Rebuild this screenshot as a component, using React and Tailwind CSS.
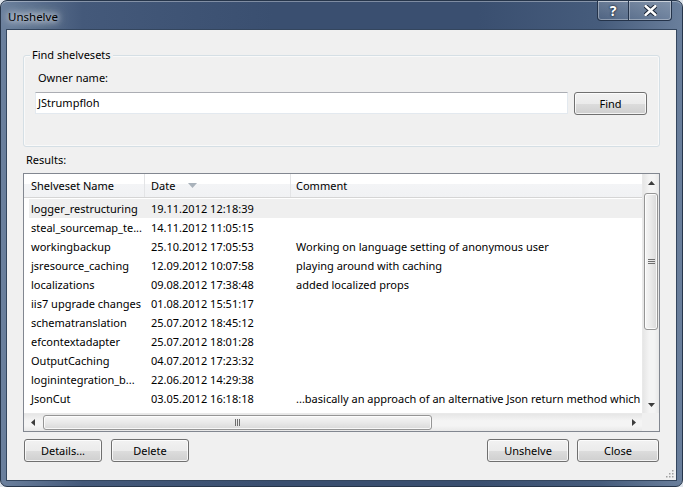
import React from "react";

const rows = [
  ["logger_restructuring", "19.11.2012 12:18:39", ""],
  ["steal_sourcemap_te...", "14.11.2012 11:05:15", ""],
  ["workingbackup", "25.10.2012 17:05:53", "Working on language setting of anonymous user"],
  ["jsresource_caching", "12.09.2012 10:07:58", "playing around with caching"],
  ["localizations", "09.08.2012 17:38:48", "added localized props"],
  ["iis7 upgrade changes", "01.08.2012 15:51:17", ""],
  ["schematranslation", "25.07.2012 18:45:12", ""],
  ["efcontextadapter", "25.07.2012 18:01:28", ""],
  ["OutputCaching", "04.07.2012 17:23:32", ""],
  ["loginintegration_b...", "22.06.2012 14:29:38", ""],
  ["JsonCut", "03.05.2012 16:18:18", "...basically an approach of an alternative Json return method which"],
];

const btn =
  "h-[23px] rounded-[3px] border border-[#707070] bg-[linear-gradient(to_bottom,#f2f2f2_0%,#ebebeb_50%,#dddddd_50%,#cfcfcf_100%)] shadow-[inset_0_0_0_1px_rgba(255,255,255,0.75)] text-black flex items-center justify-center";

const Button = ({ children, className = "" }) => (
  <button className={`${btn} ${className}`}>{children}</button>
);

const VScroll = () => (
  <div className="w-[17px] flex flex-col border-l border-[#e9e9e9] bg-[linear-gradient(to_right,#e6e6e6,#f4f4f4_40%,#f4f4f4_70%,#e8e8e8)]">
    {/* up arrow */}
    <div className="h-[17px] flex items-center justify-center">
      <svg width="7" height="4" viewBox="0 0 7 4">
        <path d="M0 4 L3.5 0 L7 4 Z" fill="#3c3c3c" />
      </svg>
    </div>
    {/* thumb */}
    <div className="mt-[2px] mx-[1px] h-[137px] rounded-[3px] border border-[#959595] bg-[linear-gradient(to_right,#f6f6f6,#e9e9e9_50%,#d9d9d9)] shadow-[inset_0_0_0_1px_rgba(255,255,255,0.8)] flex items-center justify-center">
      <div className="flex flex-col gap-[1px]">
        <div className="w-[7px] h-[1px] bg-[#6e6e6e]" />
        <div className="w-[7px] h-[1px] bg-[#6e6e6e]" />
        <div className="w-[7px] h-[1px] bg-[#6e6e6e]" />
      </div>
    </div>
    <div className="flex-1" />
    {/* down arrow */}
    <div className="h-[17px] flex items-center justify-center">
      <svg width="7" height="4" viewBox="0 0 7 4">
        <path d="M0 0 L7 0 L3.5 4 Z" fill="#3c3c3c" />
      </svg>
    </div>
  </div>
);

const HScroll = () => (
  <div className="h-[18px] flex border-t border-[#e9e9e9] bg-[linear-gradient(to_bottom,#e6e6e6,#f4f4f4_40%,#f4f4f4_70%,#e8e8e8)]">
    <div className="w-[17px] flex items-center justify-center">
      <svg width="4" height="7" viewBox="0 0 4 7">
        <path d="M4 0 L0 3.5 L4 7 Z" fill="#3c3c3c" />
      </svg>
    </div>
    <div className="my-[1px] ml-[2px] w-[389px] rounded-[3px] border border-[#959595] bg-[linear-gradient(to_bottom,#f6f6f6,#e9e9e9_50%,#d9d9d9)] shadow-[inset_0_0_0_1px_rgba(255,255,255,0.8)] flex items-center justify-center">
      <div className="flex gap-[1px]">
        <div className="w-[1px] h-[7px] bg-[#6e6e6e]" />
        <div className="w-[1px] h-[7px] bg-[#6e6e6e]" />
        <div className="w-[1px] h-[7px] bg-[#6e6e6e]" />
      </div>
    </div>
    <div className="flex-1" />
    <div className="w-[17px] flex items-center justify-center">
      <svg width="4" height="7" viewBox="0 0 4 7">
        <path d="M0 0 L4 3.5 L0 7 Z" fill="#3c3c3c" />
      </svg>
    </div>
  </div>
);

const App = () => {
  return (
    <div className="w-[683px] h-[487px] bg-[#dfe5ec] font-['Segoe_UI','Noto_Sans',sans-serif] text-[11px] leading-[16px] text-black">
      <div className="h-full flex flex-col rounded-[7px] border border-[#26354a] px-[5px] pb-[5px] bg-[linear-gradient(to_right,#6b809d_0%,#44597a_12%,#3a4f70_40%,#3a4f70_70%,#465c7c_88%,#6a7f9c_100%)] shadow-[inset_0_1px_0_rgba(255,255,255,0.35)]">
        {/* title bar */}
        <div className="h-[28px] flex justify-between">
          <div className="pl-[2px] pt-[8px]">
            <span className="text-[11.5px] text-black [text-shadow:0_0_6px_#ffffff,0_0_10px_rgba(255,255,255,0.9),0_0_14px_rgba(255,255,255,0.7)]">
              Unshelve
            </span>
          </div>
          <div className="mr-[5px] flex h-[20px] rounded-b-[4px] border border-t-0 border-[#24334a] shadow-[inset_0_0_0_1px_rgba(255,255,255,0.35)] bg-[linear-gradient(to_bottom,rgba(255,255,255,0.18),rgba(255,255,255,0.05))]">
            <div className="w-[31px] flex items-center justify-center border-r border-[#24334a] text-white font-bold text-[14px] [text-shadow:0_0_2px_#1a2535,0_0_2px_#1a2535]">
              ?
            </div>
            <div className="w-[42px] flex items-center justify-center shadow-[inset_1px_0_0_rgba(255,255,255,0.3)]">
              <svg width="13" height="11" viewBox="0 0 13 11">
                <path d="M1.5 1 L11.5 10 M11.5 1 L1.5 10" stroke="#1a2535" strokeWidth="4.5" strokeLinecap="round" />
                <path d="M1.5 1 L11.5 10 M11.5 1 L1.5 10" stroke="#ffffff" strokeWidth="2.4" strokeLinecap="round" />
              </svg>
            </div>
          </div>
        </div>

        {/* client area */}
        <div className="flex-1 flex flex-col border border-[#34465e] bg-[#f0f0f0] relative">
          {/* find group */}
          <div className="mt-[25px] mx-[16px] h-[92px] relative rounded-[3px] border border-[#d5dfe5] shadow-[inset_0_0_0_1px_rgba(255,255,255,0.6)] pt-[14px] pl-[11px] pr-[12px]">
            <span className="absolute -top-[9px] left-[6px] px-[2px] bg-[#f0f0f0]">Find shelvesets</span>
            <div className="ml-[3px]">Owner name:</div>
            <div className="mt-[6px] flex gap-[6px]">
              <div className="flex-1 h-[22px] bg-white border border-[#e3e9ef] border-t-[#abadb3] flex items-center pl-[2px]">
                JStrumpfloh
              </div>
              <Button className="w-[73px] h-[22px]">Find</Button>
            </div>
          </div>

          <div className="mt-[5px] ml-[19px]">Results:</div>

          {/* list view */}
          <div className="mt-[5px] mx-[16px] h-[259px] border border-[#828790] bg-white flex flex-col">
            <div className="flex-1 flex min-h-0">
              <div className="flex-1 flex flex-col min-w-0">
                {/* header */}
                <div className="h-[24px] flex border-b border-[#d5d5d5] bg-[linear-gradient(to_bottom,#ffffff_0%,#ffffff_45%,#f3f4f6_45%,#f1f2f4_100%)]">
                  <div className="w-[121px] border-r border-[#e3e4e6] pl-[7px] flex items-center">Shelveset Name</div>
                  <div className="w-[146px] border-r border-[#e3e4e6] pl-[6px] flex items-center">
                    Date
                    <svg className="ml-[13px]" width="9" height="5" viewBox="0 0 9 5">
                      <path d="M0 0 L9 0 L4.5 5 Z" fill="#a9b2bb" />
                    </svg>
                  </div>
                  <div className="flex-1 pl-[5px] flex items-center">Comment</div>
                </div>
                {/* rows */}
                <div className="flex-1 overflow-hidden pt-[1px] pl-[5px]">
                  {rows.map((r, i) => (
                    <div
                      key={i}
                      className={`h-[19px] flex items-center whitespace-nowrap ${i === 0 ? "bg-[#efefef]" : ""}`}
                    >
                      <div className="w-[115px] pl-[2px] overflow-hidden">{r[0]}</div>
                      <div className="w-[146px] pl-[7px]">{r[1]}</div>
                      <div className="flex-1 pl-[6px] overflow-hidden">{r[2]}</div>
                    </div>
                  ))}
                </div>
              </div>
              <VScroll />
            </div>
            <div className="flex">
              <div className="flex-1">
                <HScroll />
              </div>
              <div className="w-[17px] h-[18px] bg-[#f0f0f0]" />
            </div>
          </div>

          {/* buttons */}
          <div className="mt-[7px] ml-[17px] mr-[17px] flex">
            <Button className="w-[78px] border-[#3c7fb1] shadow-[inset_0_0_0_1px_#b8e3f7]">Details...</Button>
            <Button className="w-[78px] ml-[9px]">Delete</Button>
            <div className="flex-1" />
            <Button className="w-[82px]">Unshelve</Button>
            <Button className="w-[82px] ml-[8px]">Close</Button>
          </div>

          {/* resize grip */}
          <svg className="absolute right-[2px] bottom-[2px]" width="10" height="10" viewBox="0 0 10 10">
            {[[8, 2], [8, 5], [8, 8], [5, 5], [5, 8], [2, 8]].map(([x, y], i) => (
              <rect key={i} x={x} y={y} width="1.5" height="1.5" fill="#a0a0a0" />
            ))}
          </svg>
        </div>
      </div>
    </div>
  );
};

export default App;
